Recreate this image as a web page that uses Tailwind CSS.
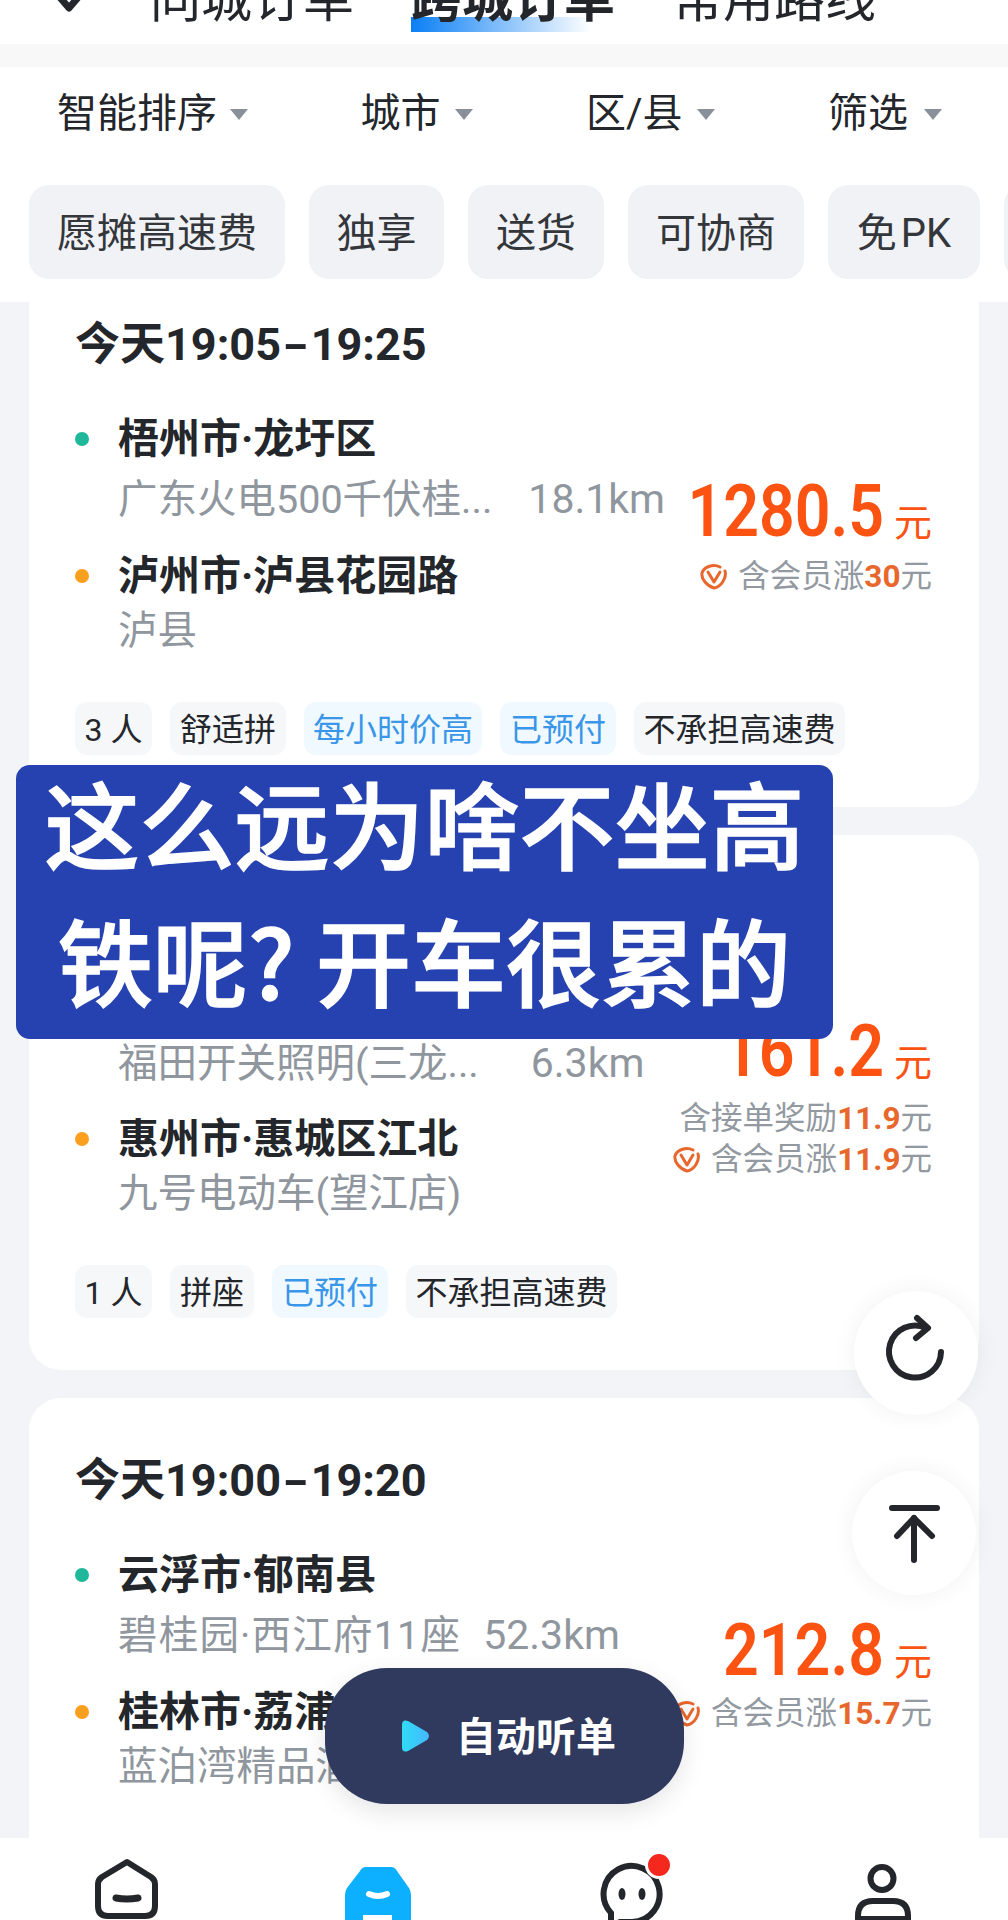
<!DOCTYPE html>
<html lang="zh">
  <head>
    <meta charset="UTF-8" />
    <title>跨城订单</title>
    <script src="https://cdn.jsdelivr.net/npm/@tailwindcss/browser@4"></script>
  </head>
  <body class="bg-[#f3f4f7]">
    <div class="relative w-[1008px] h-[1920px] overflow-hidden flex flex-col text-[#23262b] font-['Roboto','Noto_Sans_CJK_SC',sans-serif]">
      <!-- top tabs, cut off by the screenshot -->
      <div class="h-[44px] bg-white overflow-hidden relative shrink-0">
        <svg class="absolute left-[48px] top-0" width="40" height="16" viewBox="0 0 40 16"><path d="M9 -6 L21 8 L33 -6" fill="none" stroke="#23262b" stroke-width="7" stroke-linejoin="round"/></svg>
        <div class="flex gap-[57px] pl-[150px] -mt-[30px] text-[51px] leading-[60px]">
          <span>同城订单</span>
          <span class="relative font-bold">
            <span class="absolute left-0 top-[47px] w-[180px] h-[15px] bg-gradient-to-r from-[#0a7ff5] to-transparent"></span>
            <span class="relative">跨城订单</span>
          </span>
          <span>常用路线</span>
        </div>
      </div>
      <div class="h-[23px] bg-[#f8f8f9] shrink-0"></div>
      <!-- filters -->
      <div class="h-[235px] bg-white shrink-0">
        <div class="flex justify-between pl-[57px] pr-[66px] pt-[22px] text-[40px] leading-[50px]">
          <div class="flex items-center gap-[13px]">智能排序<span class="w-0 h-0 border-x-[9px] border-x-transparent border-t-[11px] border-t-[#8a9099]"></span></div>
          <div class="flex items-center gap-[15px]">城市<span class="w-0 h-0 border-x-[9px] border-x-transparent border-t-[11px] border-t-[#8a9099]"></span></div>
          <div class="flex items-center gap-[15px]">区/县<span class="w-0 h-0 border-x-[9px] border-x-transparent border-t-[11px] border-t-[#8a9099]"></span></div>
          <div class="flex items-center gap-[16px]">筛选<span class="w-0 h-0 border-x-[9px] border-x-transparent border-t-[11px] border-t-[#8a9099]"></span></div>
        </div>
        <div class="flex gap-[24px] pl-[29px] mt-[46px] text-[40px] leading-[98px] text-[#33363b] whitespace-nowrap">
          <span class="h-[94px] w-[256px] text-center shrink-0 rounded-[20px] bg-[#f0f2f5]">愿摊高速费</span>
          <span class="h-[94px] w-[135px] text-center shrink-0 rounded-[20px] bg-[#f0f2f5]">独享</span>
          <span class="h-[94px] w-[136px] text-center shrink-0 rounded-[20px] bg-[#f0f2f5]">送货</span>
          <span class="h-[94px] w-[176px] text-center shrink-0 rounded-[20px] bg-[#f0f2f5]">可协商</span>
          <span class="h-[94px] w-[152px] text-center shrink-0 rounded-[20px] bg-[#f0f2f5] [word-spacing:-6px]">免 PK</span>
          <span class="h-[94px] w-[100px] shrink-0 rounded-[20px] bg-[#f0f2f5]"></span>
        </div>
      </div>

      <!-- order list -->
      <div class="flex-1 overflow-hidden px-[29px]">
        <div class="-mt-[40px] flex flex-col gap-[28px]">

          <div class="bg-white rounded-[32px] pl-[46px] pr-[47px] pt-[57px] pb-[52px]">
            <div class="text-[45px] leading-[52px] font-bold">今天19:05<span class="inline-block scale-x-[1.6] mx-[6px]">-</span>19:25</div>
            <div class="flex justify-between mt-[42px]">
              <div class="shrink-0">
                <div class="flex items-center gap-[29px] text-[41px] leading-[52px] font-bold"><span class="w-[14px] h-[14px] rounded-full bg-[#1fb89a]"></span>梧州市·龙圩区</div>
                <div class="flex items-baseline gap-[36px] h-[52px] pl-[43px] mt-[8px] text-[39.5px] leading-[52px] text-[#8f969e] whitespace-nowrap"><span>广东火电500千伏桂...</span><span class="text-[41px]">18.1km</span></div>
                <div class="flex items-center gap-[29px] mt-[25px] text-[41px] leading-[52px] font-bold"><span class="w-[14px] h-[14px] rounded-full bg-[#fb9f1e]"></span>泸州市·泸县花园路</div>
                <div class="pl-[43px] mt-[3px] text-[39.5px] leading-[52px] text-[#8f969e]">泸县</div>
              </div>
              <div class="flex flex-col items-end pt-[59px]">
                <div class="flex items-baseline gap-[10px] text-[#fc5312] leading-[80px]"><span class="-ml-[60px] text-[72px] font-semibold scale-x-[.87] origin-right whitespace-nowrap">1280.5</span><span class="text-[38px]">元</span></div>
                <div class="flex items-center gap-[10px] -mt-[6px] text-[31.5px] leading-[40px] text-[#9299a1] whitespace-nowrap">
                  <svg width="28" height="26" viewBox="0 0 28 26" fill="none" stroke="#e8672c" stroke-width="3" stroke-linecap="round" stroke-linejoin="round"><path d="M25 7 C27 14 21 23 14 24 C7 22 1 15 2 9 C4 2 14 0 20 3"/><path d="M8 8 L14 18 L20 8"/></svg>
                  <span>含会员涨<b class="text-[#e8672c]">30</b>元</span>
                </div>
              </div>
            </div>
            <div class="flex gap-[18px] mt-[45px] text-[32px] leading-[56px] whitespace-nowrap">
              <span class="h-[53px] w-[77px] text-center rounded-[12px] bg-[#f6f7f9]">3 人</span>
              <span class="h-[53px] w-[116px] text-center rounded-[12px] bg-[#f6f7f9]">舒适拼</span>
              <span class="h-[53px] w-[178px] text-center rounded-[12px] bg-[#f0f9ff] text-[#3a96e8]">每小时价高</span>
              <span class="h-[53px] w-[116px] text-center rounded-[12px] bg-[#f0f9ff] text-[#3a96e8]">已预付</span>
              <span class="h-[53px] w-[211px] text-center rounded-[12px] bg-[#f6f7f9]">不承担高速费</span>
            </div>
          </div>

          <div class="bg-white rounded-[32px] pl-[46px] pr-[47px] pt-[57px] pb-[52px]">
            <div class="text-[45px] leading-[52px] font-bold">今天19:05<span class="inline-block scale-x-[1.6] mx-[6px]">-</span>19:25</div>
            <div class="flex justify-between mt-[42px]">
              <div class="shrink-0">
                <div class="flex items-center gap-[29px] text-[41px] leading-[52px] font-bold"><span class="w-[14px] h-[14px] rounded-full bg-[#1fb89a]"></span>深圳市·福田区</div>
                <div class="flex items-baseline gap-[52px] h-[50px] pl-[43px] text-[39.5px] leading-[50px] text-[#8f969e] whitespace-nowrap"><span>福田开关照明(三龙...</span><span class="text-[41px]">6.3km</span></div>
                <div class="flex items-center gap-[29px] mt-[25px] text-[41px] leading-[52px] font-bold"><span class="w-[14px] h-[14px] rounded-full bg-[#fb9f1e]"></span>惠州市·惠城区江北</div>
                <div class="pl-[43px] mt-[3px] text-[39.5px] leading-[52px] text-[#8f969e]">九号电动车(望江店)</div>
              </div>
              <div class="flex flex-col items-end pt-[26px]">
                <div class="flex items-baseline gap-[10px] text-[#fc5312] leading-[80px]"><span class="-ml-[60px] text-[72px] font-semibold scale-x-[.87] origin-right whitespace-nowrap">161.2</span><span class="text-[38px]">元</span></div>
                <div class="-mt-[4px] text-[31.5px] leading-[40px] text-[#9299a1] whitespace-nowrap">含接单奖励<b class="text-[#e8672c]">11.9</b>元</div>
                <div class="flex items-center gap-[10px] mt-[1px] text-[31.5px] leading-[40px] text-[#9299a1] whitespace-nowrap">
                  <svg width="28" height="26" viewBox="0 0 28 26" fill="none" stroke="#e8672c" stroke-width="3" stroke-linecap="round" stroke-linejoin="round"><path d="M25 7 C27 14 21 23 14 24 C7 22 1 15 2 9 C4 2 14 0 20 3"/><path d="M8 8 L14 18 L20 8"/></svg>
                  <span>含会员涨<b class="text-[#e8672c]">11.9</b>元</span>
                </div>
              </div>
            </div>
            <div class="flex gap-[18px] mt-[45px] text-[32px] leading-[56px] whitespace-nowrap">
              <span class="h-[53px] w-[77px] text-center rounded-[12px] bg-[#f6f7f9]">1 人</span>
              <span class="h-[53px] w-[84px] text-center rounded-[12px] bg-[#f6f7f9]">拼座</span>
              <span class="h-[53px] w-[116px] text-center rounded-[12px] bg-[#f0f9ff] text-[#3a96e8]">已预付</span>
              <span class="h-[53px] w-[211px] text-center rounded-[12px] bg-[#f6f7f9]">不承担高速费</span>
            </div>
          </div>

          <div class="bg-white rounded-[32px] pl-[46px] pr-[47px] pt-[57px] pb-[150px]">
            <div class="text-[45px] leading-[52px] font-bold">今天19:00<span class="inline-block scale-x-[1.6] mx-[6px]">-</span>19:20</div>
            <div class="flex justify-between mt-[42px]">
              <div class="shrink-0">
                <div class="flex items-center gap-[29px] text-[41px] leading-[52px] font-bold"><span class="w-[14px] h-[14px] rounded-full bg-[#1fb89a]"></span>云浮市·郁南县</div>
                <div class="flex items-baseline gap-[22px] h-[52px] pl-[43px] mt-[8px] text-[39.5px] leading-[52px] text-[#8f969e] whitespace-nowrap"><span class="tracking-[1.2px]">碧桂园·西江府11座</span><span class="text-[41px]">52.3km</span></div>
                <div class="flex items-center gap-[29px] mt-[25px] text-[41px] leading-[52px] font-bold"><span class="w-[14px] h-[14px] rounded-full bg-[#fb9f1e]"></span>桂林市·荔浦市</div>
                <div class="pl-[43px] mt-[3px] text-[39.5px] leading-[52px] text-[#8f969e]">蓝泊湾精品酒店</div>
              </div>
              <div class="flex flex-col items-end pt-[62px]">
                <div class="flex items-baseline gap-[10px] text-[#fc5312] leading-[80px]"><span class="-ml-[60px] text-[72px] font-semibold scale-x-[.87] origin-right whitespace-nowrap">212.8</span><span class="text-[38px]">元</span></div>
                <div class="flex items-center gap-[10px] -mt-[8px] text-[31.5px] leading-[40px] text-[#9299a1] whitespace-nowrap">
                  <svg width="28" height="26" viewBox="0 0 28 26" fill="none" stroke="#e8672c" stroke-width="3" stroke-linecap="round" stroke-linejoin="round"><path d="M25 7 C27 14 21 23 14 24 C7 22 1 15 2 9 C4 2 14 0 20 3"/><path d="M8 8 L14 18 L20 8"/></svg>
                  <span>含会员涨<b class="text-[#e8672c]">15.7</b>元</span>
                </div>
              </div>
            </div>
          </div>
        </div>
      </div>

      <!-- bottom nav -->
      <div class="relative h-[82px] bg-white shrink-0 grid grid-cols-4 justify-items-center overflow-hidden">
        <svg width="80" height="82" viewBox="0 0 80 82" fill="none" stroke="#23262b" stroke-width="6" stroke-linecap="round" stroke-linejoin="round"><path d="M41 24 L65 39 Q69 42 69 46 V68 Q69 78 59 78 H22 Q12 78 12 68 V46 Q12 42 16 39 Z"/><path d="M30 60 Q41 62 52 60" stroke-width="7"/></svg>
        <svg width="80" height="82" viewBox="0 0 80 82"><path d="M28 29 H53 Q57 29 59 33 L71 50 Q73 53 73 57 V82 H7 V57 Q7 53 9 50 L22 33 Q24 29 28 29Z" fill="#0cb0ff"/><path d="M31 56 Q40 60 49 56" fill="none" stroke="#fff" stroke-width="6" stroke-linecap="round"/><rect x="25" y="77" width="29" height="8" fill="#fff"/></svg>
        <svg width="80" height="82" viewBox="0 0 80 82" fill="none" stroke="#23262b" stroke-width="6" stroke-linecap="round"><path d="M21 88 V75 A28 28 0 1 1 42 84 H30"/><ellipse cx="32" cy="56" rx="3.5" ry="6" fill="#23262b" stroke="none"/><ellipse cx="52" cy="56" rx="3.5" ry="6" fill="#23262b" stroke="none"/><circle cx="69" cy="27" r="12.5" fill="#f5281e" stroke="#fff" stroke-width="3"/></svg>
        <svg width="80" height="82" viewBox="0 0 80 82" fill="none" stroke="#23262b" stroke-width="6" stroke-linecap="round"><circle cx="40" cy="40.5" r="11.5"/><path d="M16 84 V78 Q16 63 31 63 H51 Q66 63 66 78 V84"/><path d="M16 81 H66"/></svg>
      </div>

      <!-- caption over the page -->
      <div class="absolute left-[16px] top-[765px] w-[817px] h-[274px] rounded-[14px] bg-[#2542b0] text-white text-[95px] leading-[137px] font-medium [-webkit-text-stroke:1.5px_white] text-center whitespace-nowrap font-['Noto_Sans_CJK_SC',sans-serif]">
        <div class="-mt-[12px]">这么远为啥不坐高</div>
        <div>铁呢? 开车很累的</div>
      </div>

      <!-- floating buttons -->
      <div class="absolute left-[854px] top-[1291px] w-[124px] h-[124px] rounded-full bg-white shadow-[0_0_24px_rgba(0,0,0,0.06)]">
        <svg width="124" height="124" viewBox="0 0 124 124" fill="none" stroke="#25262b" stroke-width="6" stroke-linecap="round" stroke-linejoin="round"><path d="M87 61 A26 26 0 1 1 72 37"/><path d="M63 27 L74 37 L62 47"/></svg>
      </div>
      <div class="absolute left-[852px] top-[1471px] w-[124px] h-[124px] rounded-full bg-white shadow-[0_0_24px_rgba(0,0,0,0.06)]">
        <svg width="124" height="124" viewBox="0 0 124 124" fill="none" stroke="#25262b" stroke-width="6" stroke-linecap="round" stroke-linejoin="round"><path d="M40 37 H85"/><path d="M45 65 L62 47 L80 65"/><path d="M62 47 V89"/></svg>
      </div>
      <div class="absolute left-[325px] top-[1668px] w-[359px] h-[136px] rounded-[62px] bg-[#303a5e] shadow-[0_8px_24px_rgba(0,0,0,0.10)] flex items-center pl-[76px] gap-[25px] text-white text-[40px] font-bold">
        <svg width="30" height="34" viewBox="0 0 30 34"><defs><linearGradient id="play" x1="0" y1="0" x2="1" y2="0"><stop offset="0" stop-color="#2fdcf5"/><stop offset="1" stop-color="#45b8ff"/></linearGradient></defs><path d="M1 6 Q1 0 7 2 L26 13 Q30 17 26 21 L7 32 Q1 34 1 28 Z" fill="url(#play)"/></svg>
        <span class="pt-[3px]">自动听单</span>
      </div>
    </div>
  </body>
</html>
